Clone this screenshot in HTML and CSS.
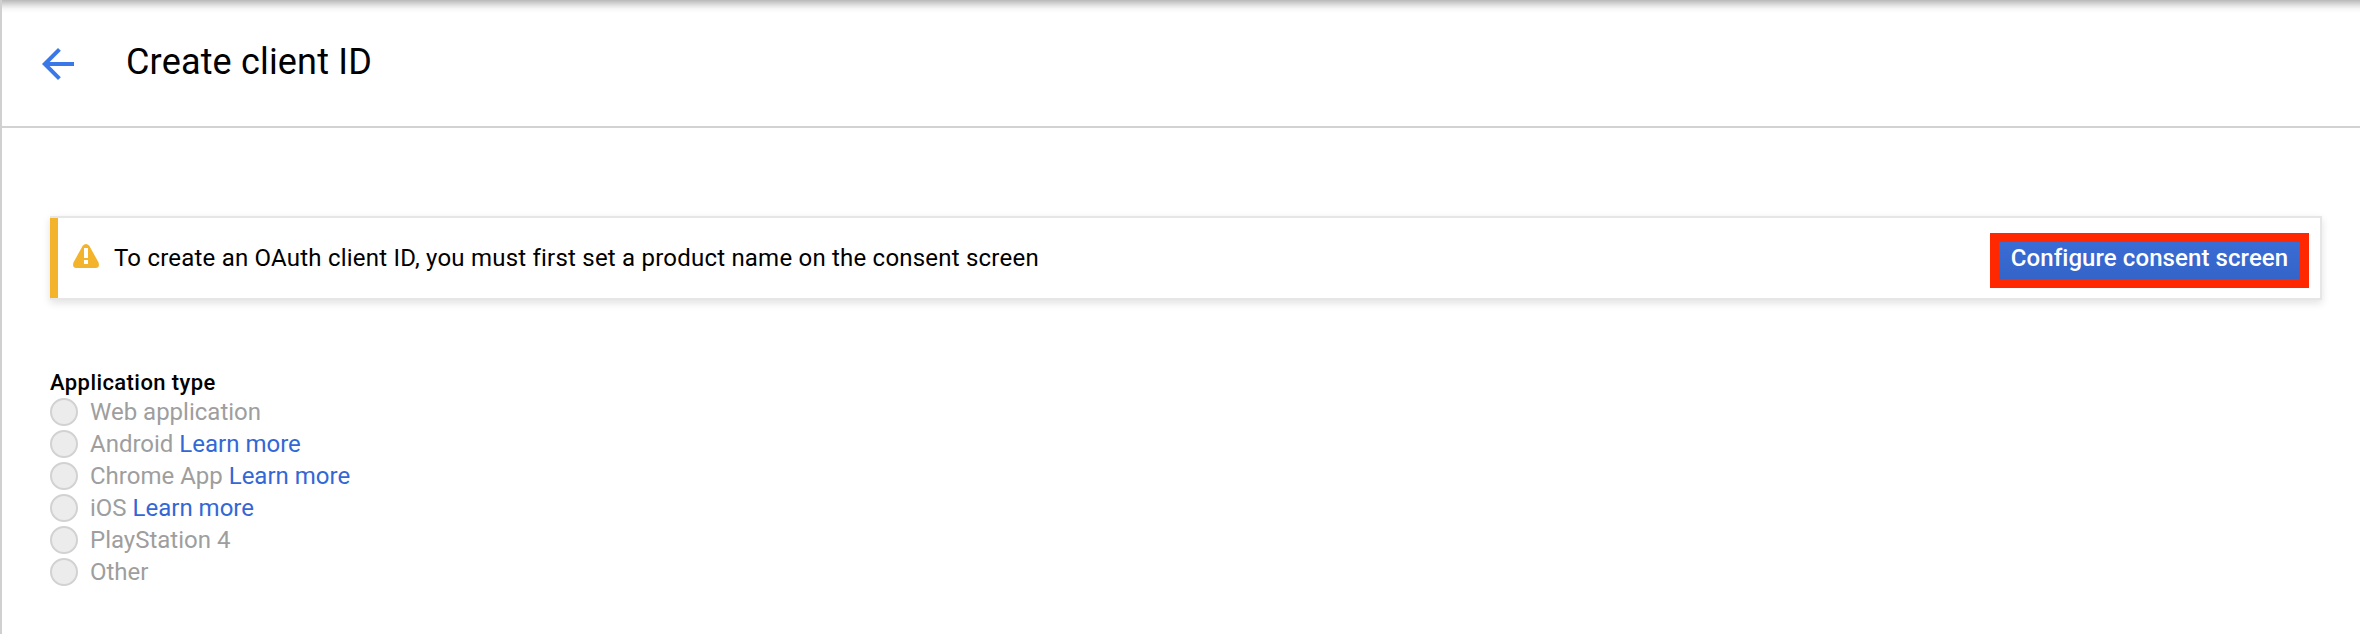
FILE: index.html
```html
<!DOCTYPE html>
<html lang="en">
<head>
<meta charset="utf-8">
<title>Create client ID</title>
<link rel="stylesheet" href="styles.css">
</head>
<body>
<div class="page">
  <header class="header">
    <svg class="back" viewBox="0 0 24 24"><path d="M20 11H7.83l5.59-5.59L12 4l-8 8 8 8 1.41-1.41L7.83 13H20z"/></svg>
    <h1 class="title">Create client ID</h1>
  </header>
  <main class="content">
    <section class="alert">
      <div class="alert-bar"></div>
      <svg class="warning" viewBox="0 0 26 24"><path class="warning-shape" d="M9.700 1.800Q13-1.800 16.300 1.800L25.400 18.200Q27.300 23.800 22.500 24H3.500Q-1.300 23.800.6 18.200Z"/><path class="warning-mark" d="M11 4h4v10h-4zM11 16h4v4h-4z"/></svg>
      <p class="alert-text">To create an OAuth client ID, you must first set a product name on the consent screen</p>
      <button class="configure">Configure consent screen</button>
    </section>
    <h2 class="label">Application type</h2>
    <ul class="options">
      <li class="option"><span class="radio"></span><span class="name">Web application</span></li>
      <li class="option"><span class="radio"></span><span class="name">Android <a class="link">Learn more</a></span></li>
      <li class="option"><span class="radio"></span><span class="name">Chrome App <a class="link">Learn more</a></span></li>
      <li class="option"><span class="radio"></span><span class="name">iOS <a class="link">Learn more</a></span></li>
      <li class="option"><span class="radio"></span><span class="name">PlayStation 4</span></li>
      <li class="option"><span class="radio"></span><span class="name">Other</span></li>
    </ul>
  </main>
</div>
</body>
</html>
```
FILE: styles.css
```css
* { box-sizing: border-box; }
body {
  margin: 0;
  background: #fff;
  color: #000;
  font-family: Roboto, sans-serif;
  font-size: 24px;
}
h1, h2, p, ul { margin: 0; padding: 0; }
.page {
  height: 634px;
  border-left: 2px solid #d0d0d0;
  background: linear-gradient(#b9b9b9 0, #cfcfcf 3px, #e6e6e6 6px, #f7f7f7 9px, #fff 13px) no-repeat 0 0 / 100% 13px;
}
.header { display: flex; height: 128px; padding: 40px 0 0 32px; border-bottom: 2px solid #d2d2d2; }
.back { width: 48px; height: 48px; fill: #3b78e7; }
.title { margin: 1px 0 0 44px; font-size: 36px; line-height: 42px; font-weight: 400; letter-spacing: .17px; }
.content { padding: 88px 38px 0 48px; }
.alert {
  display: flex;
  height: 84px;
  border: 2px solid #e6e6e6;
  border-left: 0;
  box-shadow: 0 3px 8px rgba(0, 0, 0, .12);
}
.alert-bar { width: 8px; background: #f3b32b; }
.warning { width: 26px; height: 24px; margin: 26px 0 0 15px; }
.warning-shape { fill: #f3b32b; }
.warning-mark { fill: #fff; }
.alert-text { margin: 25px 0 0 15px; line-height: 30px; letter-spacing: .213px; white-space: nowrap; }
.configure {
  width: 319px;
  height: 55px;
  margin: 15px 11px 0 auto;
  padding: 0 0 5px;
  border: 9px solid #ff2800;
  background: linear-gradient(#3a6cd5, #3464c8);
  color: #fff;
  font: 500 24px/30px Roboto, sans-serif;
  letter-spacing: .08px;
  white-space: nowrap;
}
.label { padding-top: 1px; margin-top: 67px; font-size: 22px; line-height: 29px; font-weight: 500; letter-spacing: .42px; }
.options { margin-top: -1px; list-style: none; }
.option { display: flex; align-items: center; height: 32px; }
.radio { width: 28px; height: 28px; border: 2px solid #d2d2d2; border-radius: 50%; background: #ececec; }
.name { margin-left: 12px; color: #9e9e9e; line-height: 30px; }
.link { color: #3367d6; }
```
